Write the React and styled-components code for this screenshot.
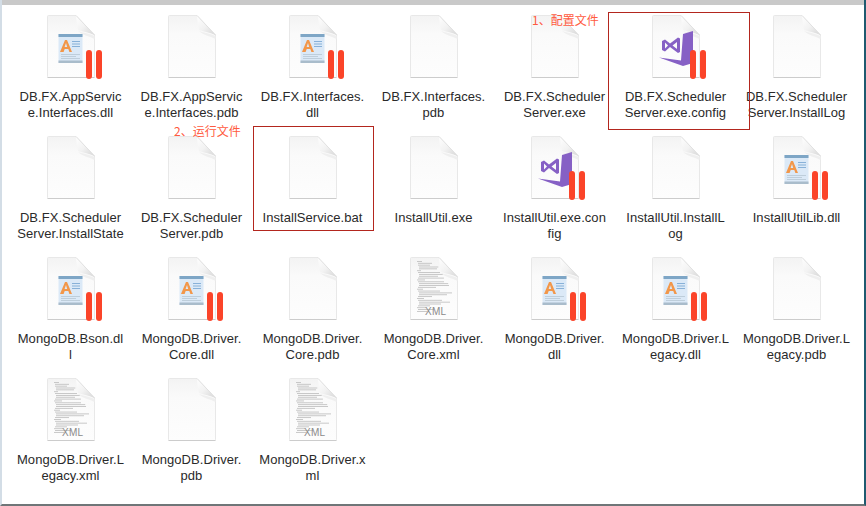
import React from 'react';
import styled, { createGlobalStyle } from 'styled-components';

const GlobalStyle = createGlobalStyle`
  html, body {
    margin: 0;
    padding: 0;
    background: #fff;
  }
`;

const Window = styled.div`
  position: relative;
  width: 866px;
  height: 506px;
  box-sizing: border-box;
  overflow: hidden;
  background: #fff;
  border-left: 2px solid #d3dde6;
  border-right: 2px solid #1f5a70;
  border-bottom: 2px solid #6f7678;
  font-family: "Liberation Sans", Arial, sans-serif;
`;

const TopBar = styled.div`
  height: 5px;
  background: #c9c9c9;
`;

const FileGrid = styled.div`
  display: grid;
  grid-template-columns: repeat(7, 121px);
  grid-auto-rows: 121px;
  padding: 10px 0 0 8px;
`;

const FileCell = styled.div`
  display: flex;
  flex-direction: column;
  align-items: center;
  min-width: 0;
`;

const IconSvg = styled.svg`
  display: block;
  width: 48px;
  height: 63px;
  overflow: visible;
  flex: none;
`;

const FileName = styled.div`
  margin-top: 11px;
  font-size: 13px;
  line-height: 16px;
  letter-spacing: 0.05px;
  color: #2a2a2a;
  text-align: center;
  white-space: nowrap;
`;

const NameLine = styled.span`
  display: block;
`;

const RedBox = styled.div`
  position: absolute;
  box-sizing: border-box;
  left: ${p => p.$left}px;
  top: ${p => p.$top}px;
  width: ${p => p.$width}px;
  height: ${p => p.$height}px;
  border: 1px solid #b3261e;
`;

const Note = styled.div`
  position: absolute;
  left: ${p => p.$left}px;
  top: ${p => p.$top}px;
  font-family: "Noto Sans CJK SC", sans-serif;
  font-size: 12px;
  line-height: 14px;
  color: #ff5a40;
  white-space: nowrap;
`;

const Sheet = ({ id }) => (
  <>
    <defs>
      <linearGradient id={`sheet-${id}`} x1="0" y1="0" x2="0" y2="1">
        <stop offset="0" stopColor="#f3f3f3" />
        <stop offset="0.3" stopColor="#fafafa" />
        <stop offset="1" stopColor="#fdfdfd" />
      </linearGradient>
      <linearGradient id={`fold-${id}`} x1="0" y1="0" x2="1" y2="1">
        <stop offset="0" stopColor="#fefefe" />
        <stop offset="0.5" stopColor="#f2f2f2" />
        <stop offset="1" stopColor="#d6d6d6" />
      </linearGradient>
    </defs>
    <path
      d="M1.5 0.5H29L47.5 20V61.5a1 1 0 0 1-1 1H1.5a1 1 0 0 1-1-1V1.5a1 1 0 0 1 1-1Z"
      fill={`url(#sheet-${id})`}
      stroke="#e8e8e8"
      strokeWidth="1"
    />
    <path d="M0.5 62.5H47.5" stroke="#cccccc" strokeWidth="1" />
    <path d="M31 16C36 18 43 18.5 47.5 21V24C42 21 35 20 31 16Z" fill="#efefef" />
    <path d="M29 0.5L47.5 20C43 17.5 36 17 31 15C29.5 10 29.5 5 29 0.5Z" fill={`url(#fold-${id})`} />
    <path d="M29 0.5L47.5 20" stroke="#dedede" strokeWidth="0.8" />
  </>
);

const PauseBars = ({ x }) => (
  <>
    <rect x={x} y="35" width="6" height="29" rx="3" fill="#fb4429" />
    <rect x={x + 10} y="35" width="6" height="29" rx="3" fill="#fb4429" />
  </>
);

const DllArt = () => (
  <>
    <rect x="11.5" y="19" width="24" height="29" fill="#dbe9f7" />
    <rect x="11.5" y="19" width="24" height="3" fill="#7ea6c6" />
    <rect x="11.5" y="45.5" width="24" height="2.5" fill="#a9bccb" />
    <path d="M13 37L18 25h2l5 12h-2.6l-1.1-3h-3.6l-1.1 3ZM17.6 32h2.6L19 28Z" fill="#f2974a" />
    <path d="M25 26.5h8M25 29h8M25 31.5h8" stroke="#7eaad4" strokeWidth="0.9" />
    <path d="M14 39.5h19M14 41.5h15M14 43.5h19" stroke="#b6c6d3" strokeWidth="0.8" />
    <PauseBars x={39} />
  </>
);

const VsArt = () => (
  <>
    <path d="M31 19L41 16V48L31 51L7 42.5L29 45.5Z" fill="#8660c5" />
    <path
      fillRule="evenodd"
      d="M10 26L13 24.5L18 28.5L26 22.5L28 23.5V37L26 38L18 32L13 36.5L10 35ZM13 27.5V33.5L16 30.5ZM20.5 30.5L25 34V27Z"
      fill="#8660c5"
    />
    <PauseBars x={38} />
  </>
);

// the tiny code lines on the xml page, [indent, width]
const XML_LINES = [
  [7, 5], [8, 14], [8, 12], [9, 20], [9, 18], [7, 4], [8, 22], [9, 25], [9, 19], [8, 30],
  [7, 8], [8, 26], [9, 32], [9, 30], [8, 18], [7, 6], [8, 22], [9, 33], [9, 28], [8, 14],
  [7, 7], [8, 24], [9, 31], [9, 22], [8, 12], [7, 9], [8, 16], [7, 10]
];

const XmlArt = () => (
  <>
    {XML_LINES.map(([x, w], i) => (
      <rect
        key={i}
        x={x}
        y={4 + i * 1.85}
        width={Math.min(w, 16 + i * 1.1)}
        height="0.9"
        fill="#c2c2c2"
      />
    ))}
    <text x="15" y="58" fontFamily="Liberation Sans" fontSize="10" letterSpacing="0.3" fill="#8a8a8a">XML</text>
  </>
);

const FileIcon = ({ kind, id }) => (
  <IconSvg viewBox="0 0 48 63">
    <Sheet id={id} />
    {kind === 'dll' && <DllArt />}
    {kind === 'vs' && <VsArt />}
    {kind === 'xml' && <XmlArt />}
  </IconSvg>
);

const FILES = [
  { kind: 'dll', name: ['DB.FX.AppServic', 'e.Interfaces.dll'] },
  { kind: 'doc', name: ['DB.FX.AppServic', 'e.Interfaces.pdb'] },
  { kind: 'dll', name: ['DB.FX.Interfaces.', 'dll'] },
  { kind: 'doc', name: ['DB.FX.Interfaces.', 'pdb'] },
  { kind: 'doc', name: ['DB.FX.Scheduler', 'Server.exe'] },
  { kind: 'vs', name: ['DB.FX.Scheduler', 'Server.exe.config'] },
  { kind: 'doc', name: ['DB.FX.Scheduler', 'Server.InstallLog'] },
  { kind: 'doc', name: ['DB.FX.Scheduler', 'Server.InstallState'] },
  { kind: 'doc', name: ['DB.FX.Scheduler', 'Server.pdb'] },
  { kind: 'doc', name: ['InstallService.bat'] },
  { kind: 'doc', name: ['InstallUtil.exe'] },
  { kind: 'vs', name: ['InstallUtil.exe.con', 'fig'] },
  { kind: 'doc', name: ['InstallUtil.InstallL', 'og'] },
  { kind: 'dll', name: ['InstallUtilLib.dll'] },
  { kind: 'dll', name: ['MongoDB.Bson.dl', 'l'] },
  { kind: 'dll', name: ['MongoDB.Driver.', 'Core.dll'] },
  { kind: 'doc', name: ['MongoDB.Driver.', 'Core.pdb'] },
  { kind: 'xml', name: ['MongoDB.Driver.', 'Core.xml'] },
  { kind: 'dll', name: ['MongoDB.Driver.', 'dll'] },
  { kind: 'dll', name: ['MongoDB.Driver.L', 'egacy.dll'] },
  { kind: 'doc', name: ['MongoDB.Driver.L', 'egacy.pdb'] },
  { kind: 'xml', name: ['MongoDB.Driver.L', 'egacy.xml'] },
  { kind: 'doc', name: ['MongoDB.Driver.', 'pdb'] },
  { kind: 'xml', name: ['MongoDB.Driver.x', 'ml'] }
];

export default function App() {
  return (
    <Window>
      <GlobalStyle />
      <TopBar />
      <FileGrid>
        {FILES.map((file, i) => (
          <FileCell key={i}>
            <FileIcon kind={file.kind} id={i} />
            <FileName>
              {file.name.map(line => (
                <NameLine key={line}>{line}</NameLine>
              ))}
            </FileName>
          </FileCell>
        ))}
      </FileGrid>
      <RedBox $left={606} $top={12} $width={142} $height={118} />
      <RedBox $left={251} $top={126} $width={121} $height={105} />
      <Note $left={530} $top={13}>1、配置文件</Note>
      <Note $left={172} $top={124}>2、运行文件</Note>
    </Window>
  );
}
